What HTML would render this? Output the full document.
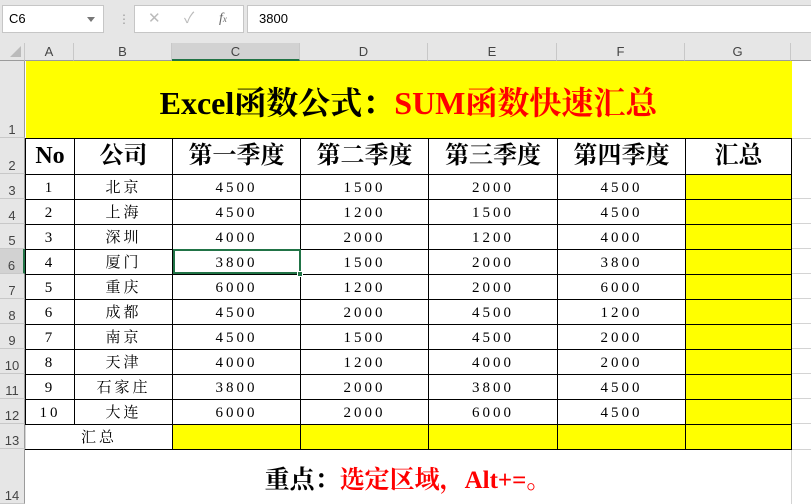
<!DOCTYPE html>
<html><head><meta charset="utf-8"><style>
*{margin:0;padding:0;box-sizing:border-box}
body{width:811px;height:504px;overflow:hidden;background:#fff;position:relative;font-family:"Liberation Sans","Noto Sans CJK SC",sans-serif}
.abs{position:absolute}
.top{left:0;top:0;width:811px;height:43px;background:#e6e6e6}
.box{background:#fff;border:1px solid #c6c6c6}
.ch{position:absolute;top:43px;height:18px;background:#e6e6e6;border-right:1px solid #c8c8c8;border-bottom:1px solid #9b9b9b;font-size:13px;color:#444;text-align:center;line-height:18px}
.rh{position:absolute;left:0;width:25px;background:#e6e6e6;border-right:1px solid #9b9b9b;border-bottom:1px solid #c8c8c8;font-size:13px;color:#444;text-align:center;display:flex;align-items:flex-end;justify-content:center;padding-bottom:0}
table{position:absolute;left:25px;top:61px;border-collapse:collapse;table-layout:fixed;font-family:"Liberation Serif","Noto Serif CJK SC",serif}
td{padding:0;text-align:center;overflow:hidden;white-space:nowrap}
.d td{border:1px solid #000;height:25px;font-size:15px;letter-spacing:3px;line-height:23px;position:relative;top:0}
.d td span{position:relative;top:2px}
.h td{border:1px solid #000;height:36px;font-size:24px;font-weight:bold;line-height:34px}
.y{background:#ff0}
</style></head><body>
<div class="abs top"></div>
<div class="abs box" style="left:2px;top:5px;width:102px;height:28px;font-size:13px;line-height:26px;padding-left:6px">C6<span style="position:absolute;right:8px;top:11px;border:4px solid transparent;border-top:5px solid #777"></span></div>
<div class="abs" style="left:118px;top:12px;color:#999;font-size:12px">⋮</div>
<div class="abs box" style="left:134px;top:5px;width:110px;height:28px;color:#bbb;font-size:15px;line-height:26px"><span style="position:absolute;left:13px">✕</span><span style="position:absolute;left:49px">✓</span><span style="position:absolute;left:84px;font-family:'Liberation Serif',serif;font-style:italic;color:#666;font-size:14px">f<small style="font-size:9px">x</small></span></div>
<div class="abs box" style="left:247px;top:5px;width:570px;height:28px;font-size:13px;line-height:26px;padding-left:11px">3800</div>
<div class="abs" style="left:0;top:43px;width:25px;height:18px;background:#e6e6e6;border-right:1px solid #c8c8c8;border-bottom:1px solid #9b9b9b"><span style="position:absolute;right:3px;bottom:3px;border-left:11px solid transparent;border-bottom:11px solid #bbb"></span></div>
<div class="ch" style="left:25px;width:49px">A</div>
<div class="ch" style="left:74px;width:98px">B</div>
<div class="ch" style="left:172px;width:128px;background:#d2d2d2;border-bottom:2px solid #217346">C</div>
<div class="ch" style="left:300px;width:128px">D</div>
<div class="ch" style="left:428px;width:129px">E</div>
<div class="ch" style="left:557px;width:128px">F</div>
<div class="ch" style="left:685px;width:106px">G</div>
<div class="ch" style="left:791px;width:20px;border-right:0"></div>
<div class="rh" style="top:61px;height:77px">1</div>
<div class="rh" style="top:138px;height:36px">2</div>
<div class="rh" style="top:174px;height:25px">3</div>
<div class="rh" style="top:199px;height:25px">4</div>
<div class="rh" style="top:224px;height:25px">5</div>
<div class="rh" style="top:249px;height:25px;background:#d2d2d2;border-right:2px solid #217346">6</div>
<div class="rh" style="top:274px;height:25px">7</div>
<div class="rh" style="top:299px;height:25px">8</div>
<div class="rh" style="top:324px;height:25px">9</div>
<div class="rh" style="top:349px;height:25px">10</div>
<div class="rh" style="top:374px;height:25px">11</div>
<div class="rh" style="top:399px;height:25px">12</div>
<div class="rh" style="top:424px;height:25px">13</div>
<div class="rh" style="top:449px;height:55px">14</div>
<div class="abs" style="left:791px;top:61px;width:20px;height:443px;border-left:1px solid #d4d4d4"></div>
<div class="abs" style="left:791px;top:138px;width:20px;border-top:1px solid #d4d4d4"></div>
<div class="abs" style="left:791px;top:174px;width:20px;height:250px;background:repeating-linear-gradient(#fff 0 24px,#d4d4d4 24px 25px)"></div>
<div class="abs" style="left:791px;top:449px;width:20px;border-top:1px solid #d4d4d4"></div>
<table>
<colgroup><col style="width:49px"><col style="width:98px"><col style="width:128px"><col style="width:128px"><col style="width:129px"><col style="width:128px"><col style="width:106px"></colgroup>
<tr><td colspan="7" class="y" style="height:77px;font-size:32px;font-weight:bold;padding-top:3px">Excel函数公式：<span style="color:#f00">SUM函数快速汇总</span></td></tr>
<tr class="h"><td>No</td><td>公司</td><td>第一季度</td><td>第二季度</td><td>第三季度</td><td>第四季度</td><td>汇总</td></tr>
<tr class="d"><td><span>1</span></td><td><span>北京</span></td><td><span>4500</span></td><td><span>1500</span></td><td><span>2000</span></td><td><span>4500</span></td><td class="y"></td></tr>
<tr class="d"><td><span>2</span></td><td><span>上海</span></td><td><span>4500</span></td><td><span>1200</span></td><td><span>1500</span></td><td><span>4500</span></td><td class="y"></td></tr>
<tr class="d"><td><span>3</span></td><td><span>深圳</span></td><td><span>4000</span></td><td><span>2000</span></td><td><span>1200</span></td><td><span>4000</span></td><td class="y"></td></tr>
<tr class="d"><td><span>4</span></td><td><span>厦门</span></td><td style="outline:2px solid #217346;outline-offset:-2px"><span>3800</span></td><td><span>1500</span></td><td><span>2000</span></td><td><span>3800</span></td><td class="y"></td></tr>
<tr class="d"><td><span>5</span></td><td><span>重庆</span></td><td><span>6000</span></td><td><span>1200</span></td><td><span>2000</span></td><td><span>6000</span></td><td class="y"></td></tr>
<tr class="d"><td><span>6</span></td><td><span>成都</span></td><td><span>4500</span></td><td><span>2000</span></td><td><span>4500</span></td><td><span>1200</span></td><td class="y"></td></tr>
<tr class="d"><td><span>7</span></td><td><span>南京</span></td><td><span>4500</span></td><td><span>1500</span></td><td><span>4500</span></td><td><span>2000</span></td><td class="y"></td></tr>
<tr class="d"><td><span>8</span></td><td><span>天津</span></td><td><span>4000</span></td><td><span>1200</span></td><td><span>4000</span></td><td><span>2000</span></td><td class="y"></td></tr>
<tr class="d"><td><span>9</span></td><td><span>石家庄</span></td><td><span>3800</span></td><td><span>2000</span></td><td><span>3800</span></td><td><span>4500</span></td><td class="y"></td></tr>
<tr class="d"><td><span>10</span></td><td><span>大连</span></td><td><span>6000</span></td><td><span>2000</span></td><td><span>6000</span></td><td><span>4500</span></td><td class="y"></td></tr>
<tr class="d"><td colspan="2" style="border-left-color:#d4d4d4"><span>汇总</span></td><td class="y"></td><td class="y"></td><td class="y"></td><td class="y"></td><td class="y"></td></tr>
</table>
<div class="abs" style="left:297px;top:271px;width:6px;height:6px;background:#217346;border:1px solid #fff"></div>
<div class="abs" style="left:25px;top:449px;width:766px;height:55px;text-align:center;padding-top:11px;font-family:'Liberation Serif','Noto Serif CJK SC',serif;font-size:25px;font-weight:bold">重点：<span style="color:#f00">选定区域，Alt+=。</span></div>
</body></html>
